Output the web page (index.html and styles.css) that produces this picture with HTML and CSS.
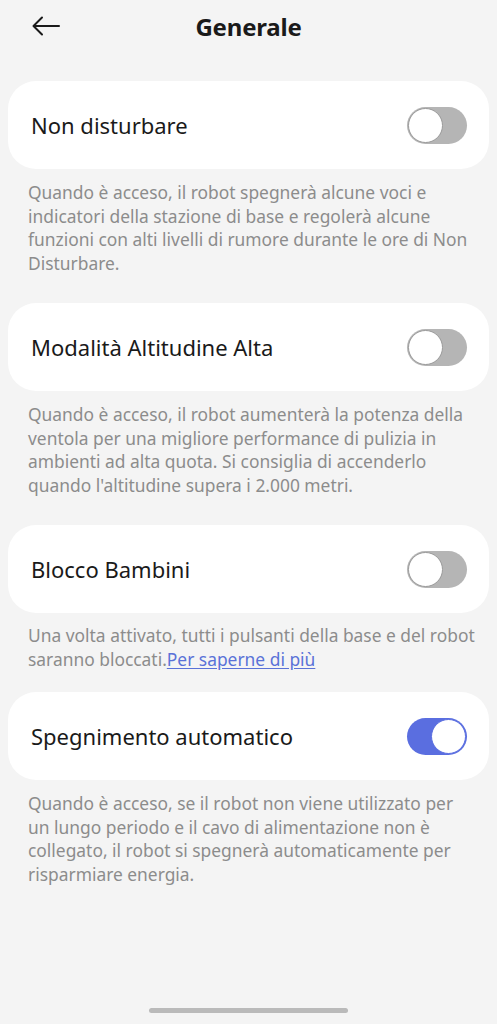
FILE: index.html
```html
<!DOCTYPE html>
<html lang="it">
<head>
<meta charset="utf-8">
<title>Generale</title>
<link rel="stylesheet" href="styles.css">
</head>
<body>
<div class="screen">
  <header class="topbar">
    <button class="back" aria-label="Indietro">
      <svg width="28" height="20" viewBox="0 0 28 20" fill="none" stroke="#1a1a1a" stroke-width="2" stroke-linecap="round" stroke-linejoin="round">
        <path d="M27 10H2"/>
        <path d="M10 1.5L1.5 10L10 18.5"/>
      </svg>
    </button>
    <h1 class="title">Generale</h1>
  </header>

  <main class="list">
    <section class="group">
      <div class="card">
        <span class="label">Non disturbare</span>
        <span class="switch"><span class="knob"></span></span>
      </div>
      <p class="desc">Quando è acceso, il robot spegnerà alcune voci e indicatori della stazione di base e regolerà alcune funzioni con alti livelli di rumore durante le ore di Non Disturbare.</p>
    </section>

    <section class="group">
      <div class="card">
        <span class="label">Modalità Altitudine Alta</span>
        <span class="switch"><span class="knob"></span></span>
      </div>
      <p class="desc">Quando è acceso, il robot aumenterà la potenza della ventola per una migliore performance di pulizia in ambienti ad alta quota. Si consiglia di accenderlo quando l'altitudine supera i 2.000 metri.</p>
    </section>

    <section class="group">
      <div class="card">
        <span class="label">Blocco Bambini</span>
        <span class="switch"><span class="knob"></span></span>
      </div>
      <p class="desc desc-tight">Una volta attivato, tutti i pulsanti della base e del robot saranno bloccati.<a class="link" href="#">Per saperne di più</a></p>
    </section>

    <section class="group">
      <div class="card">
        <span class="label">Spegnimento automatico</span>
        <span class="switch on"><span class="knob"></span></span>
      </div>
      <p class="desc">Quando è acceso, se il robot non viene utilizzato per un lungo periodo e il cavo di alimentazione non è collegato, il robot si spegnerà automaticamente per risparmiare energia.</p>
    </section>
  </main>

  <div class="home-indicator"><span class="bar"></span></div>
</div>
</body>
</html>
```

FILE: styles.css
```css
* { box-sizing: border-box; }

html, body {
  margin: 0;
  padding: 0;
  background: #f4f4f4;
}

body {
  font-family: "Noto Sans", "Open Sans", sans-serif;
  color: #1a1a1a;
}

.screen {
  width: 497px;
  height: 1024px;
  display: flex;
  flex-direction: column;
  background: #f4f4f4;
}

.topbar {
  height: 52px;
  display: flex;
  align-items: center;
  justify-content: center;
  position: relative;
}

.back {
  position: absolute;
  left: 32px;
  top: 16px;
  padding: 0;
  border: 0;
  background: none;
  display: flex;
  width: 30px;
  height: 20px;
}

.title {
  margin: 0;
  font-size: 24px;
  font-weight: 700;
  letter-spacing: -0.2px;
  color: #1a1a1a;
}

.list {
  padding: 29px 8px 0 8px;
  display: flex;
  flex-direction: column;
  flex: 1;
}

.card {
  height: 88px;
  background: #ffffff;
  border-radius: 28px;
  display: flex;
  align-items: center;
  justify-content: space-between;
  padding: 0 22px 0 23px;
}

.label {
  font-size: 22px;
  color: #1a1a1a;
}

.switch {
  width: 60px;
  height: 37px;
  border-radius: 19px;
  background: #b5b5b5;
  display: flex;
  align-items: center;
  padding: 1px;
}

.switch .knob {
  width: 35px;
  height: 35px;
  border-radius: 50%;
  background: #ffffff;
  border: 1.5px solid #9a9a9a;
}

.switch.on {
  background: #5a6ee0;
  justify-content: flex-end;
}

.switch.on .knob {
  border-color: #5a6ee0;
}

.desc {
  margin: 12px 0 28px 0;
  padding: 0 20px 0 20px;
  font-size: 17.4px;
  line-height: 23.5px;
  color: #8c8c8c;
}

.desc-tight {
  padding-right: 6px;
  margin-top: 11px;
  margin-bottom: 21px;
}

.link {
  display: inline-block;
  line-height: 23.5px;
  color: #5a72d8;
  text-decoration: underline;
  text-underline-offset: 2px;
}

.home-indicator {
  height: 24px;
  display: flex;
  justify-content: center;
  align-items: flex-start;
  padding-top: 8px;
}

.home-indicator .bar {
  width: 199px;
  height: 5px;
  border-radius: 3px;
  background: #bababa;
}
```
